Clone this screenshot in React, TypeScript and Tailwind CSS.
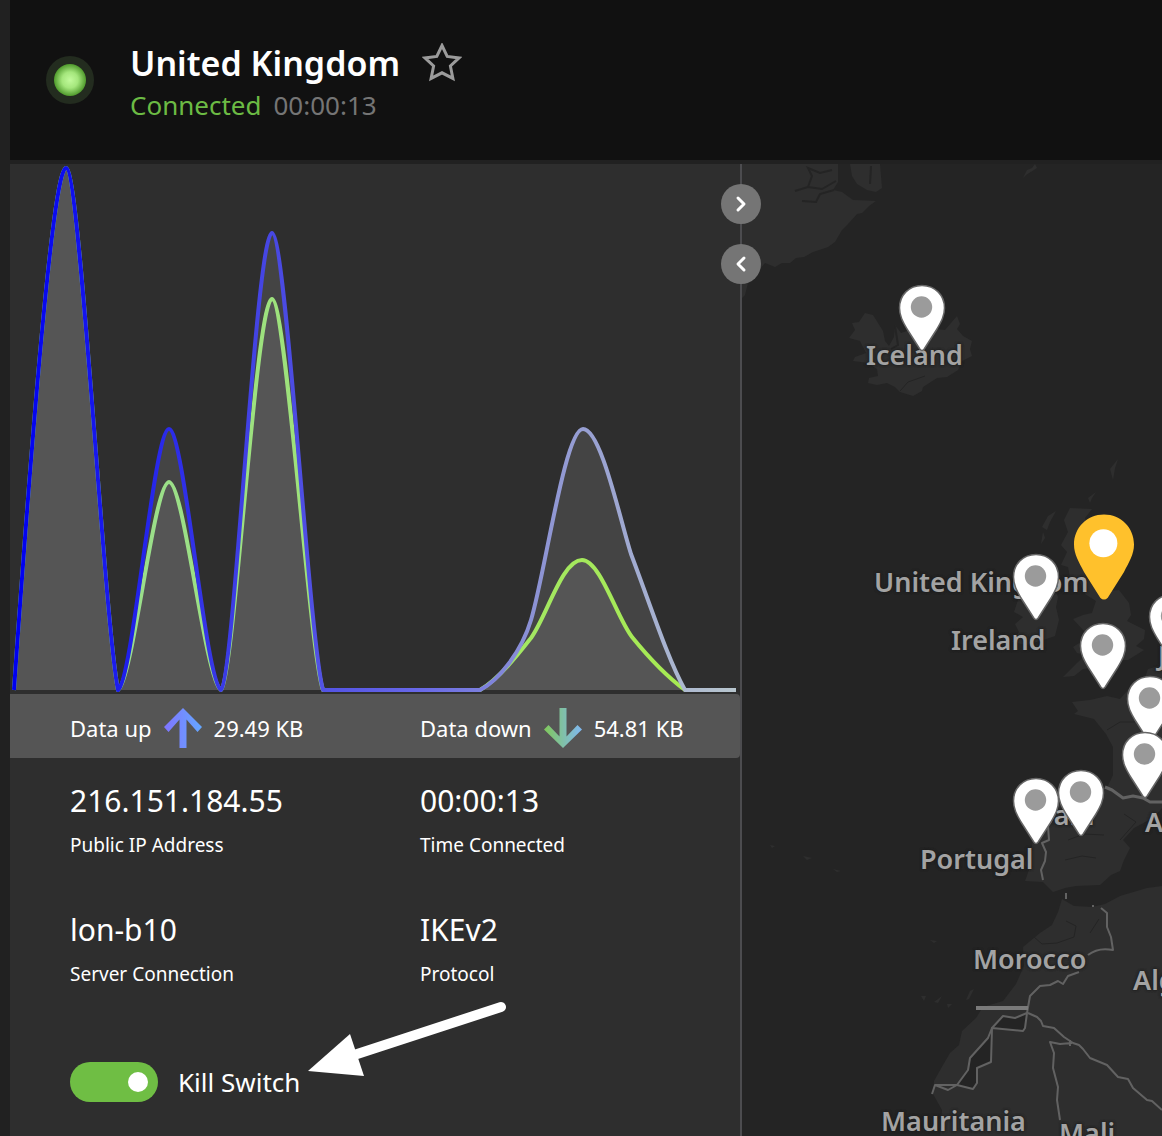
import * as React from "react"
import { ChevronLeft, ChevronRight } from "lucide-react"
import { clsx } from "clsx"

interface Place {
  name: string
  className: string
}

interface Pin {
  name: string
  className: string
  active?: boolean
}

const places: Place[] = [
  { name: "Iceland", className: "left-[124px] top-[171px]" },
  { name: "United Kingdom", className: "left-[132px] top-[398px]" },
  { name: "Ireland", className: "left-[209px] top-[456px]" },
  { name: "Jersey", className: "left-[416px] top-[471px]" },
  { name: "Spain", className: "left-[280px] top-[631px]" },
  { name: "Andorra", className: "left-[403px] top-[638px]" },
  { name: "Portugal", className: "left-[178px] top-[675px]" },
  { name: "Morocco", className: "left-[231px] top-[775px]" },
  { name: "Algeria", className: "left-[391px] top-[796px]" },
  { name: "Mauritania", className: "left-[139px] top-[937px]" },
  { name: "Mali", className: "left-[317px] top-[949px]" },
]

const pins: Pin[] = [
  { name: "Reykjavik", className: "left-[156px] top-[120px]" },
  { name: "Dublin", className: "left-[270px] top-[389px]" },
  { name: "London", className: "left-[337px] top-[458px]" },
  { name: "Amsterdam", className: "left-[406px] top-[429px]" },
  { name: "Paris", className: "left-[384px] top-[511px]" },
  { name: "Toulouse", className: "left-[379px] top-[567px]" },
  { name: "Lisbon", className: "left-[270px] top-[613px]" },
  { name: "Madrid", className: "left-[315px] top-[605px]" },
  { name: "United Kingdom", className: "left-[332px] top-[350px]", active: true },
]

const stats = [
  { value: "216.151.184.55", label: "Public IP Address" },
  { value: "00:00:13", label: "Time Connected" },
  { value: "lon-b10", label: "Server Connection" },
  { value: "IKEv2", label: "Protocol" },
]

const UP_LINE =
  "M14 690C28 490 52 168 66 168C80 168 104 620 118 690C133 680 154 429 169 429C184 429 205 680 221 690C234 680 256 233 272 233C286 233 309 640 323 690H480C500 680 522 650 531 620C545 574 565 429 583 429C601 429 620 520 631 554C650 604 668 660 685 690H736"
const DOWN_LINE =
  "M14 690C28 490 52 168 66 168C80 168 104 620 118 690C133 680 154 482 169 482C184 482 205 680 221 690C234 680 256 299 272 299C286 299 309 650 323 690H480C500 678 520 652 531 638C547 616 562 560 582 560C600 560 617 618 632 637C645 653 666 676 685 690H736"

const TrafficChart: React.FC = () => (
  <svg viewBox="10 164 730 530" className="block w-full" role="img" aria-label="Traffic">
    <defs>
      <linearGradient id="up-line" gradientUnits="userSpaceOnUse" x1="14" y1="0" x2="736" y2="0">
        <stop offset="0" stopColor="#0000f0" />
        <stop offset="0.2" stopColor="#2828ea" />
        <stop offset="0.36" stopColor="#4848e2" />
        <stop offset="0.56" stopColor="#6868e8" />
        <stop offset="0.72" stopColor="#8c92d4" />
        <stop offset="1" stopColor="#b8c6ce" />
      </linearGradient>
      <linearGradient id="down-line" gradientUnits="userSpaceOnUse" x1="14" y1="0" x2="736" y2="0">
        <stop offset="0" stopColor="#98dc98" />
        <stop offset="0.4" stopColor="#9ee27a" />
        <stop offset="1" stopColor="#a8ec4c" />
      </linearGradient>
    </defs>
    <path d={UP_LINE} fill="#444444" />
    <path d={DOWN_LINE} fill="#555555" />
    <path d={DOWN_LINE} fill="none" stroke="url(#down-line)" strokeWidth="4" strokeLinejoin="round" />
    <path d={UP_LINE} fill="none" stroke="url(#up-line)" strokeWidth="4" strokeLinejoin="round" />
  </svg>
)

interface TrafficArrowProps {
  id: string
  from: string
  to: string
  down?: boolean
}

const TrafficArrow: React.FC<TrafficArrowProps> = ({ id, from, to, down = false }) => (
  <svg viewBox="0 0 38 40" className="h-10 w-[38px]" aria-hidden="true">
    <defs>
      <linearGradient id={id} gradientUnits="userSpaceOnUse" x1="0" y1="0" x2="38" y2="0">
        <stop offset="0" stopColor={from} />
        <stop offset="1" stopColor={to} />
      </linearGradient>
    </defs>
    <path
      d={
        down
          ? "M15.500 0H22.500V28.500L33.500 17L38 21.500L19 40L0 21.500L4.500 17L15.500 28.500Z"
          : "M15.500 40H22.500V11.500L33.500 24L38 19L19 0L0 19L4.500 24L15.500 11.500Z"
      }
      fill={`url(#${id})`}
    />
  </svg>
)

const MapPin: React.FC<Pin> = ({ name, className, active = false }) => (
  <button type="button" aria-label={name} className={clsx("absolute cursor-pointer", className)}>
    <svg viewBox="0 0 48 68" className={clsx("block", active ? "h-[86px] w-[60px]" : "h-[68px] w-[48px]")}>
      {active ? (
        <>
          <path d="M24 0C10.500 0 0 10.500 0 24C0 32 4 38 8 46L21 66.500Q24 69.500 27 66.500L40 46C44 38 48 32 48 24C48 10.500 37.500 0 24 0Z" fill="#ffc12c" />
          <circle cx="23.500" cy="23" r="11.200" fill="#ffffff" />
        </>
      ) : (
        <>
          <path
            d="M24 1.500C11 1.500 1.500 11 1.500 24C1.500 32 5 38 9 45L21.800 65Q24 68 26.200 65L39 45C43 38 46.500 32 46.500 24C46.500 11 37 1.500 24 1.500Z"
            fill="#ffffff"
            stroke="#666666"
            strokeWidth="1.500"
          />
          <circle cx="23.500" cy="23" r="10.700" fill="#9b9b9b" />
        </>
      )}
    </svg>
  </button>
)

const Land: React.FC = () => (
  <svg viewBox="742 164 420 972" className="absolute left-0 top-0 h-[972px] w-[420px]" aria-hidden="true">
    <g fill="#2e2e2e">
      {/* Greenland */}
      <path d="M742 164H838V182L833 190L842 192L853 200L876 201L869 206L862 213L857 214L848 224L842 230L835 242L828 247L813 252L804 257L796 258L790 263L782 263L775 267L765 263L757 272L748 283L745 295L742 298Z" />
      <path d="M850 164H880L882 188L876 192L867 190L857 184L852 176Z" />
      <path d="M1035 164L1037 168L1026 175L1023 178L1027 170L1032 168Z" />
      {/* Iceland */}
      <path d="M849 338L855 330L852 323L859 322L865 313L873 315L878 323L883 331L885 341L889 346L894 337L895 325L901 333L910 330L920 334L935 329L945 330L957 316L960 324L957 329L963 336L972 341L970 349L972 356L962 361L958 370L947 377L937 378L923 387L922 391L913 396L900 392L895 387L887 383L877 385L868 383L869 378L878 376L877 369L868 363L853 361L855 357L866 353L860 341Z" />
      {/* British Isles */}
      <path d="M1070 508L1092 509L1085 518L1088 528L1102 530L1102 550L1096 566L1104 578L1108 591L1119 590L1129 603L1131 615L1127 621L1145 630L1144 639L1136 646L1144 650L1128 660L1112 660L1100 667L1083 669L1074 676L1063 677L1077 663L1086 655L1077 653L1073 647L1087 638L1084 631L1073 619L1083 615L1092 613L1096 601L1085 594L1080 582L1070 577L1068 567L1061 565L1067 552L1061 545L1068 532L1064 520Z" />
      <path d="M1018 600L1030 592L1040 579L1051 580L1058 597L1056 607L1059 620L1055 636L1040 641L1026 645L1012 642L1019 632L1015 624L1023 617L1014 612Z" />
      <path d="M1056 511L1050 522L1047 530L1042 527L1048 516ZM1043 532L1045 538L1041 544ZM1096 492L1092 498L1090 503L1088 498ZM1118 459L1115 468L1113 480L1110 469Z" />
      {/* Continental Europe */}
      <path d="M1162 665L1148 669L1143 684L1128 690L1120 699L1107 696L1090 700L1072 702L1078 711L1074 714L1094 719L1106 734L1113 747L1113 775L1107 788L1075 787L1045 790L1038 807L1035 830L1031 850L1024 864L1029 870L1025 881L1043 882L1053 892L1065 888L1076 886L1100 885L1111 875L1120 871L1124 860L1130 848L1123 840L1134 828L1153 818L1162 808Z" />
      {/* North Africa */}
      <path d="M1062 899L1074 906L1092 907L1105 904L1120 896L1147 888L1162 886V1136H940L942 1110L933 1094L934 1081L943 1065L950 1053L959 1045L962 1031L976 1018L983 1007L1003 1001L1016 984L1024 966L1023 947L1040 933L1052 925L1058 912Z" />
      {/* Canaries and Madeira */}
      <path d="M921 996L926 996L924 1001ZM934 1002L942 996L938 1003ZM947 1004L952 1004L948 1008ZM966 1000L970 991L974 989L969 999ZM930 940L937 941L934 943ZM770 845L775 846L772 848ZM803 856L812 858L807 860ZM833 869L841 871L837 872Z" />
    </g>
    {/* fjords and rivers */}
    <g fill="none" stroke="#242424" strokeWidth="2">
      <path d="M795 191L808 187L812 176L808 168L820 173L832 170M808 187L822 189L836 181M802 201L816 202L820 194L834 190M871 166L870 184M895 326L898 345L891 349" />
      <path d="M900 391L908 382L925 376" strokeWidth="1" />
      <path d="M1034 937L1042 944L1057 943L1074 937L1076 926L1066 921M1090 933L1099 919M1068 840L1084 834L1104 835M1065 860L1082 856L1096 858M1120 840L1136 822L1124 814M1107 730L1120 722L1135 722" strokeWidth="1" />
    </g>
    {/* Western Sahara */}
    <path d="M1027 1013L1015 1018L1003 1016L992 1028L1023 1031L1025 1028ZM992 1028L991 1062L977 1068V1083L973 1089L957 1085L968 1070L970 1058L988 1038Z" fill="#242424" />
    {/* borders */}
    <g fill="none" stroke="#626262" strokeWidth="2" strokeLinejoin="round">
      <path d="M1101 908L1107 913L1107 927L1111 937L1113 950Q1098 947 1088 955M1079 972L1068 976L1063 984L1058 981L1050 985L1040 986L1030 996L1027 1013" />
      <path d="M1027 1013L1015 1018L1003 1016L992 1028L988 1038L970 1058L968 1070L957 1085L948 1090L935 1085L932 1094" />
      <path d="M1027 1013L1025 1028L1023 1031L992 1028L991 1062L977 1068V1083L973 1089L957 1085H935" />
      <path d="M1028 1013L1037 1017L1041 1021L1043 1026L1054 1028L1064 1037L1073 1043L1079 1045L1083 1049L1090 1058L1107 1065L1118 1077L1128 1079L1133 1088L1147 1100L1152 1101L1162 1110" />
      <path d="M1072 1043L1060 1044L1050 1042L1054 1053L1053 1068L1058 1087L1057 1100L1060 1120M1070 1040V1046" />
      <path d="M1048 826L1049 840L1042 843L1046 852L1045 861L1041 870L1043 880M1066 893V899M1092 906H1094" />
      <path d="M1105 787L1112 790L1123 798L1133 796L1143 798L1150 802L1162 802" strokeWidth="3" />
    </g>
    <path d="M976 1008H1028" stroke="#7a7a7a" strokeWidth="4" />
  </svg>
)

const ServerMap: React.FC = () => (
  <section aria-label="Server map" className="relative min-w-0 flex-1 overflow-hidden bg-[#242424]">
    <Land />
    {places.map((place) => (
      <span
        key={place.name}
        className={clsx(
          "absolute whitespace-nowrap text-[27px] font-semibold leading-10 text-[#a3a3a3] [text-shadow:0_0_3px_#1c1c1c,0_0_3px_#1c1c1c]",
          place.className
        )}
      >
        {place.name}
      </span>
    ))}
    {pins.map((pin) => (
      <MapPin key={pin.name} {...pin} />
    ))}
  </section>
)

const Header: React.FC = () => (
  <header className="flex h-40 items-center bg-[#111111] pl-9">
    <div className="flex size-12 items-center justify-center rounded-full bg-[#232c1f]">
      <div className="size-8 rounded-full bg-[radial-gradient(circle_closest-side,#c2fa9c_0%,#a4e67c_50%,#4f9a2c_100%)]" />
    </div>
    <div className="ml-9 pt-[2px]">
      <div className="flex items-center gap-[22px]">
        <h1 className="text-[34px] font-semibold leading-[48px] text-white">United Kingdom</h1>
        <button type="button" aria-label="Add to favourites" className="cursor-pointer">
          <svg viewBox="0 0 40 40" className="block size-10" fill="none" stroke="#9b9b9b" strokeWidth="3">
            <path d="M20 2.500L25.200 13.400L37 14.900L28.400 23L30.900 35.400L20 29.800L9.100 35.400L11.600 23L3 14.900L14.800 13.400Z" />
          </svg>
        </button>
      </div>
      <p className="flex gap-3 text-[26px] leading-9">
        <span className="text-[#6cbb44]">Connected</span>
        <span className="text-[#757575]">00:00:13</span>
      </p>
    </div>
  </header>
)

const DetailsPanel: React.FC = () => (
  <section aria-label="Connection details" className="relative w-[732px] shrink-0 border-r-2 border-[#4c4c4f] bg-[#2e2e2e] text-white">
    <TrafficChart />
    <div className="grid h-16 grid-cols-[350px_1fr] items-center rounded-r bg-[#555555] pl-[60px] pt-1 text-[22px]">
      <div className="flex items-center gap-3">
        <span>Data up</span>
        <TrafficArrow id="arrow-up" from="#8074ff" to="#64a8ff" />
        <span>29.49 KB</span>
      </div>
      <div className="flex items-center gap-3">
        <span>Data down</span>
        <TrafficArrow id="arrow-down" from="#80c85a" to="#80b8f4" down />
        <span>54.81 KB</span>
      </div>
    </div>
    <dl className="grid grid-cols-[350px_1fr] gap-y-10 pl-[60px] pt-5">
      {stats.map((stat) => (
        <div key={stat.label} className="flex flex-col-reverse">
          <dt className="text-[19px] leading-[44px]">{stat.label}</dt>
          <dd className="text-[30px] leading-[45px]">{stat.value}</dd>
        </div>
      ))}
    </dl>
    <label className="mt-16 ml-[60px] inline-flex cursor-pointer items-center gap-5 text-[26px] leading-[44px]">
      <input type="checkbox" role="switch" defaultChecked className="peer sr-only" />
      <span className="flex h-10 w-[88px] items-center justify-end rounded-full bg-[#6fbe44] px-[10px]">
        <span className="size-5 rounded-full bg-white" />
      </span>
      Kill Switch
    </label>
    <svg viewBox="0 0 200 76" className="absolute left-[298px] top-[837px] h-[76px] w-[200px]" aria-hidden="true">
      <path d="M193 6L40 56" stroke="#ffffff" strokeWidth="10" strokeLinecap="round" />
      <path d="M0 70L42 33L56 75Z" fill="#ffffff" />
    </svg>
    <div className="absolute -right-[21px] top-5 z-10 flex flex-col gap-5">
      <button type="button" aria-label="Expand panel" className="flex size-10 cursor-pointer items-center justify-center rounded-full bg-[#757575]">
        <ChevronRight className="size-6 text-white" strokeWidth={3} />
      </button>
      <button type="button" aria-label="Collapse panel" className="flex size-10 cursor-pointer items-center justify-center rounded-full bg-[#757575]">
        <ChevronLeft className="size-6 text-white" strokeWidth={3} />
      </button>
    </div>
  </section>
)

const App: React.FC = () => (
  <div className="flex min-h-screen flex-col overflow-hidden bg-[#212121] pl-[10px] font-['Noto_Sans',sans-serif]">
    <Header />
    <main className="mt-1 flex flex-1">
      <DetailsPanel />
      <ServerMap />
    </main>
  </div>
)

export default App
